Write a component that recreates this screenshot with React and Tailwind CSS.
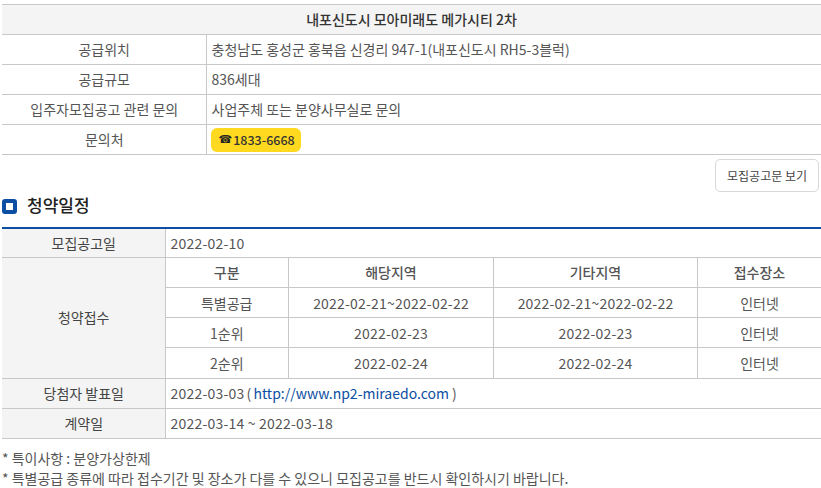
const labelCell = 'border border-[#c8c8c8] border-l-0 font-normal text-center align-middle p-0 pl-px'
const valueCell = 'border border-[#c8c8c8] border-r-0 text-left align-middle px-[5px] py-0'
const innerCell = 'border border-[#c8c8c8] text-center align-middle p-0 h-[30px]'

const schedule = [
  { name: '특별공급', local: '2022-02-21~2022-02-22', other: '2022-02-21~2022-02-22' },
  { name: '1순위', local: '2022-02-23', other: '2022-02-23' },
  { name: '2순위', local: '2022-02-24', other: '2022-02-24' },
]

const supply = [
  { label: '공급위치', value: '충청남도 홍성군 홍북읍 신경리 947-1(내포신도시 RH5-3블럭)' },
  { label: '공급규모', value: '836세대' },
  { label: '입주자모집공고 관련 문의', value: '사업주체 또는 분양사무실로 문의' },
]

export default function App() {
  return (
    <div className="w-[821px] h-[488px] overflow-hidden bg-white pl-[2px] pt-[4px] text-[14px] leading-[20px] text-[#555] font-['Noto_Sans_CJK_KR','Noto_Sans',sans-serif]">
      {/* 공급 정보 */}
      <table className="w-[819px] table-fixed border-collapse">
        <colgroup>
          <col className="w-[204px]" />
          <col />
        </colgroup>
        <tbody>
          <tr className="h-[30px]">
            <th colSpan={2} className="border-y border-[#c8c8c8] bg-[#f4f4f4] text-center align-middle font-medium text-[#333] p-0 pb-[2px]">
              내포신도시 모아미래도 메가시티 2차
            </th>
          </tr>
          {supply.map((row) => (
            <tr key={row.label} className="h-[30px]">
              <th className={`${labelCell} pb-[2px]`}>{row.label}</th>
              <td className={`${valueCell} pb-[2px]`}>{row.value}</td>
            </tr>
          ))}
          <tr className="h-[30px]">
            <th className={`${labelCell} pb-[2px]`}>문의처</th>
            <td className={valueCell}>
              <span className="inline-flex items-center h-[24px] -ml-px w-[90px] pl-[8px] rounded-[6px] bg-[#ffd91f] text-[12.5px] font-medium text-[#333] align-middle">
                <span className="text-[11px] mr-px text-[#222] font-['DejaVu_Sans',sans-serif]">☎</span>1833-6668
              </span>
            </td>
          </tr>
        </tbody>
      </table>

      <div className="flex justify-end mt-[4px] pr-[2px]">
        <button className="h-[33px] w-[104px] rounded-[5px] border border-[#d8d8d8] bg-white text-[12px] text-[#444]">
          모집공고문 보기
        </button>
      </div>

      {/* 청약일정 */}
      <div className="flex items-center gap-[10px] h-[26px] mt-[1px]">
        <span className="w-[15px] h-[15px] rounded-[3px] border-[4px] border-[#0b4ea2] bg-white" />
        <h3 className="text-[17px] font-medium text-[#222] pb-[3px]">청약일정</h3>
      </div>

      <table className="w-[819px] mt-[8px] table-fixed border-collapse border-t-2 border-t-[#0b4ea2]">
        <colgroup>
          <col className="w-[163px]" />
          <col />
        </colgroup>
        <tbody>
          <tr className="h-[29px]">
            <th className={`${labelCell} border-t-0 bg-[#f4f4f4] font-medium text-[#444]`}>모집공고일</th>
            <td className={`${valueCell} border-t-0 tracking-[0.2px]`}>2022-02-10</td>
          </tr>
          <tr>
            <th className={`${labelCell} pb-[2px] bg-[#f4f4f4] font-medium text-[#444]`}>청약접수</th>
            <td className="border border-[#c8c8c8] border-r-0 p-0">
              <table className="w-full table-fixed border-collapse">
                <colgroup>
                  <col className="w-[123px]" />
                  <col className="w-[205px]" />
                  <col className="w-[204px]" />
                  <col />
                </colgroup>
                <tbody>
                  <tr>
                    <th className={`${innerCell} border-t-0 border-l-0 font-medium`}>구분</th>
                    <th className={`${innerCell} border-t-0 font-medium`}>해당지역</th>
                    <th className={`${innerCell} border-t-0 font-medium`}>기타지역</th>
                    <th className={`${innerCell} border-t-0 border-r-0 font-medium`}>접수장소</th>
                  </tr>
                  {schedule.map((row, i) => (
                    <tr key={row.name}>
                      <td className={`${innerCell} border-l-0 ${i === 2 ? 'border-b-0' : ''}`}>{row.name}</td>
                      <td className={`${innerCell} tracking-[0.2px] ${i === 2 ? 'border-b-0' : ''}`}>{row.local}</td>
                      <td className={`${innerCell} tracking-[0.2px] ${i === 2 ? 'border-b-0' : ''}`}>{row.other}</td>
                      <td className={`${innerCell} border-r-0 ${i === 2 ? 'border-b-0' : ''}`}>인터넷</td>
                    </tr>
                  ))}
                </tbody>
              </table>
            </td>
          </tr>
          <tr className="h-[30px]">
            <th className={`${labelCell} bg-[#f4f4f4] font-medium text-[#444]`}>당첨자 발표일</th>
            <td className={valueCell}>
              <span className="tracking-[0.2px]">2022-03-03</span>
              <span className="-ml-px"> ( </span>
              <a className="text-[#0b4ea2] -ml-px">http://www.np2-miraedo.com</a> )
            </td>
          </tr>
          <tr className="h-[30px]">
            <th className={`${labelCell} bg-[#f4f4f4] font-medium text-[#444]`}>계약일</th>
            <td className={`${valueCell} tracking-[0.2px]`}>2022-03-14 ~ 2022-03-18</td>
          </tr>
        </tbody>
      </table>

      <div className="mt-[9px] text-[14px] leading-[20px]">
        <p>* 특이사항 : 분양가상한제</p>
        <p>* 특별공급 종류에 따라 접수기간 및 장소가 다를 수 있으니 모집공고를 반드시 확인하시기 바랍니다.</p>
      </div>
    </div>
  )
}
